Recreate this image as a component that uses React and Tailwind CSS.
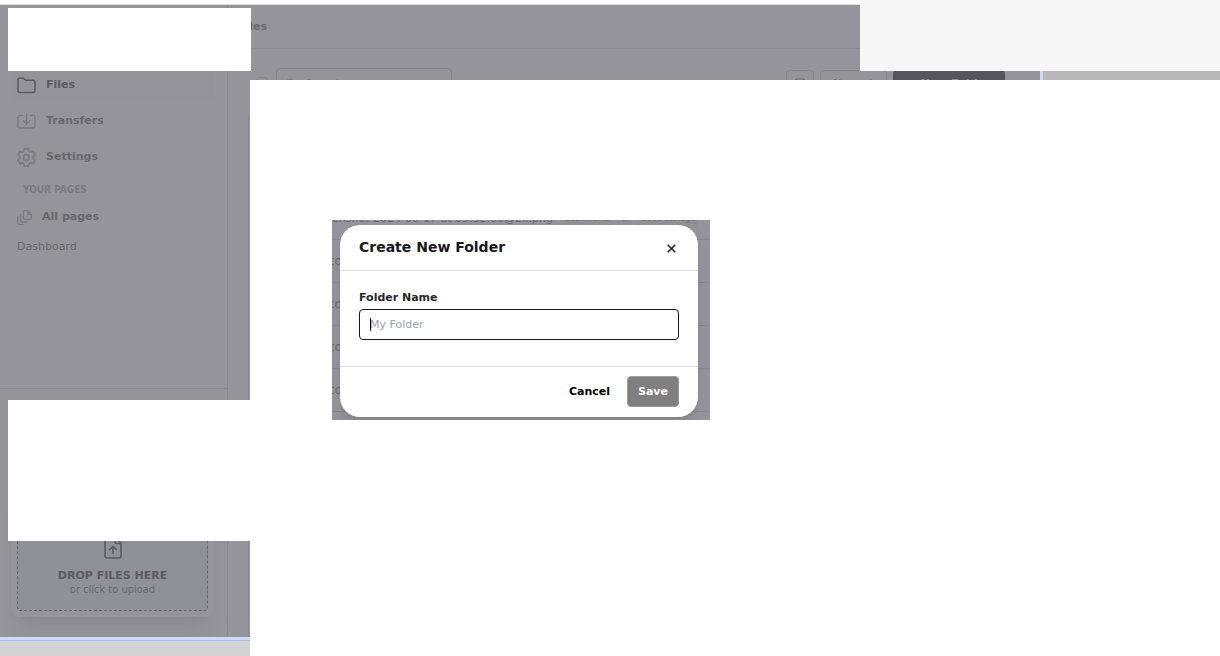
import React from "react";

const rows = [1, 2, 3, 4];

function FolderIcon() {
  return (
    <svg className="w-[19px] h-[17px] shrink-0 text-[#5c5b61]" viewBox="0 0 19 17" fill="none" stroke="currentColor" strokeWidth="1.6" strokeLinejoin="round">
      <path d="M1 3.2C1 1.8 1.7 1 3 1h2.6c.8 0 1.2.3 1.6.9l.5.7c.3.4.7.6 1.2.6H16c1.3 0 2 .8 2 2V13.5c0 1.3-.7 2-2 2H3c-1.3 0-2-.7-2-2V3.2Z" />
    </svg>
  );
}

function TransferIcon() {
  return (
    <svg className="w-[19px] h-[17px] shrink-0 text-[#7c7b81]" viewBox="0 0 19 17" fill="none" stroke="currentColor" strokeWidth="1.5" strokeLinecap="round" strokeLinejoin="round">
      <path d="M5.5 2.5H3C1.7 2.500 1 3.200 1 4.500v8.500c0 1.300.7 2 2 2h13c1.300 0 2-.7 2-2V4.500c0-1.300-.7-2-2-2h-2.500M9.500.8v10M6.300 7.800l3.200 3.300L12.700 7.800" />
    </svg>
  );
}

function GearIcon() {
  return (
    <svg className="w-[19px] h-[19px] shrink-0 text-[#7c7b81]" viewBox="2.2 2.2 19.6 19.6" fill="none" stroke="currentColor" strokeWidth="1.8" strokeLinecap="round" strokeLinejoin="round">
      <path d="M9.594 3.940c.09-.542.560-.940 1.110-.940h2.593c.550 0 1.020.398 1.110.940l.213 1.281c.063.374.313.686.645.870.074.040.147.083.220.127.325.196.720.257 1.075.124l1.217-.456a1.125 1.125 0 0 1 1.370.490l1.296 2.247a1.125 1.125 0 0 1-.260 1.431l-1.003.827c-.293.241-.438.613-.430.992a7.723 7.723 0 0 1 0 .255c-.008.378.137.750.430.991l1.004.827c.424.350.534.955.260 1.430l-1.298 2.247a1.125 1.125 0 0 1-1.369.491l-1.217-.456c-.355-.133-.750-.072-1.076.124a6.470 6.470 0 0 1-.220.128c-.331.183-.581.495-.644.869l-.213 1.281c-.090.543-.560.940-1.110.940h-2.594c-.550 0-1.019-.398-1.110-.940l-.213-1.281c-.062-.374-.312-.686-.644-.870a6.520 6.520 0 0 1-.220-.127c-.325-.196-.720-.257-1.076-.124l-1.217.456a1.125 1.125 0 0 1-1.369-.490l-1.297-2.247a1.125 1.125 0 0 1 .260-1.431l1.004-.827c.292-.240.437-.613.430-.991a6.932 6.932 0 0 1 0-.255c.007-.380-.138-.751-.430-.992l-1.004-.827a1.125 1.125 0 0 1-.260-1.430l1.297-2.247a1.125 1.125 0 0 1 1.370-.491l1.216.456c.356.133.751.072 1.076-.124.072-.044.146-.086.220-.128.332-.183.582-.495.644-.869l.214-1.280Z" />
      <circle cx="12" cy="12" r="3" />
    </svg>
  );
}

function PagesIcon() {
  return (
    <svg className="w-[15px] h-[15px] shrink-0 text-[#7c7b81]" viewBox="0 0 15 15" fill="none" stroke="currentColor" strokeWidth="1.3" strokeLinejoin="round">
      <path d="M7.5.7h3.3l3.5 3.5v4.1c0 .7-.4 1.1-1.1 1.1H7.5c-.7 0-1.1-.4-1.1-1.1V1.8C6.4 1.1 6.8.7 7.5.7ZM10.6.9v3.500h3.500M3.600 3.700v7.400c0 .7.4 1.100 1.100 1.100h6M.7 6.300v6.900c0 .7.4 1.100 1.100 1.100h5" />
    </svg>
  );
}

function UploadIcon() {
  return (
    <svg className="w-[18px] h-6 shrink-0 text-[#5c5b61]" viewBox="0 0 18 24" fill="none" stroke="currentColor" strokeWidth="1.6" strokeLinejoin="round" strokeLinecap="round">
      <path d="M3 1h8l6 6v13c0 1.300-.7 2-2 2H3c-1.300 0-2-.7-2-2V3c0-1.300.7-2 2-2ZM11 1v5c0 1 .5 1.500 1.500 1.500H17M9 17.500v-7M5.700 13.500 9 10.200l3.300 3.300" />
    </svg>
  );
}

function NavItem({ icon, children, active }) {
  return (
    <a href="#" className={"flex items-center gap-[10px] h-[30px] px-[6px] rounded font-bold " + (active ? "bg-[#949399] text-[#5c5b61]" : "")}>
      {icon}
      {children}
    </a>
  );
}

function Sidebar() {
  return (
    <aside className="flex w-[228px] shrink-0 flex-col border-r border-[#8b8a90] pr-[13px] pl-[11px]">
      <nav className="flex h-[383px] flex-col pt-[65px]">
        <div className="flex flex-col gap-[6px]">
          <NavItem active icon={<FolderIcon />}>Files</NavItem>
          <NavItem icon={<TransferIcon />}>Transfers</NavItem>
          <NavItem icon={<GearIcon />}>Settings</NavItem>
        </div>
        <h2 className="mt-[10px] px-3 text-[10px] leading-4 font-bold font-['DejaVu_Sans_Condensed','DejaVu_Sans',sans-serif] text-[#7c7b81]">YOUR PAGES</h2>
        <a href="#" className="mt-[9px] flex h-5 items-center gap-[10px] px-[6px] font-bold">
          <PagesIcon />
          All pages
        </a>
        <a href="#" className="mt-3 px-[6px] leading-4">Dashboard</a>
      </nav>
      <div className="-mr-[13px] -ml-[11px] flex flex-1 flex-col justify-end border-t border-[#8b8a90] pr-[13px] pb-5 pl-[11px]">
        <div className="rounded-lg p-[6px] shadow-xl shadow-black/5">
          <button className="flex h-[110px] w-full flex-col items-center rounded border border-dashed border-[#69686e] bg-[#909196] pt-[34px] text-[#5c5b61]">
            <UploadIcon />
            <span className="mt-2 font-bold leading-4">DROP FILES HERE</span>
            <span className="leading-3 font-['DejaVu_Sans_Condensed','DejaVu_Sans',sans-serif] text-[#6a696f]">or click to upload</span>
          </button>
        </div>
      </div>
    </aside>
  );
}

function TopStrip() {
  return (
    <div className="relative flex h-[75px] flex-col overflow-hidden bg-[#95949a] text-[#6a696f]">
      <div className="flex h-11 shrink-0 items-center border-b border-[#8b8a90] pt-px font-bold">
        <span className="-ml-3">Files</span>
      </div>
      <div className="flex items-start pt-[19px]">
        <input type="checkbox" aria-label="Select all" className="mt-[9px] ml-[6px] h-3 w-3 appearance-none rounded border border-[#87868c]" />
        <label className="ml-2 flex h-8 w-[176px] items-center gap-2 rounded border border-[#87868c] px-2">
          <svg className="h-3 w-3" viewBox="0 0 12 12" fill="none" stroke="#7c7b81"><circle cx="5" cy="5" r="4" /><path d="m8 8 3 3" /></svg>
          <input aria-label="Search" placeholder="Search" className="w-24 bg-transparent placeholder:text-[#7c7b81]" />
        </label>
        <div className="ml-[334px] flex gap-[6px] pt-[2px]">
          <button aria-label="View" className="flex h-7 w-7 items-center justify-center rounded border border-[#87868c]">
            <svg className="h-3 w-3" viewBox="0 0 12 12" fill="none" stroke="#6a696f"><rect x="1" y="1" width="10" height="10" rx="2" /></svg>
          </button>
          <button className="h-7 w-[67px] rounded border border-[#87868c]">Newest</button>
          <button className="h-7 w-28 rounded bg-[#56555b] font-bold text-[#95949a]">+ New Folder</button>
        </div>
      </div>
      <div className="absolute top-0 right-0 h-full w-[180px] border-l-[3px] border-[#cbdcfb] bg-[#b9b9b9]" />
    </div>
  );
}

function CreateFolderDialog() {
  return (
    <div className="relative mt-[140px] ml-[82px] h-[200px] w-[378px] overflow-hidden bg-[#95949a] px-2 pt-[5px] text-[#6a696f]">
      <div aria-hidden="true" className="absolute inset-x-0 -top-[10px]">
        <div className="flex h-[30px] items-start border-b border-[#87868c] whitespace-nowrap">
          <span className="leading-[18px]">enshot 2024-06-17 at 03.32.00@2x.png</span>
          <span className="ml-2 flex gap-1 text-[8px] leading-[18px]">
            <span className="rounded bg-[#909095] px-1">bookmarks</span>
            <span className="rounded bg-[#909095] px-1">ui</span>
            <span className="rounded bg-[#909095] px-1">cloud storage</span>
          </span>
        </div>
        {rows.map((row) => (
          <div key={row} className="flex h-[43px] items-center border-b border-[#87868c] text-[12px]">
            <span className="-ml-1">co</span>
          </div>
        ))}
      </div>
      <form role="dialog" aria-labelledby="dialog-title" onSubmit={(e) => e.preventDefault()} className="relative flex w-[358px] flex-col rounded-[20px] bg-white text-black shadow-lg">
        <header className="flex h-[46px] items-center justify-between border-b border-[#e2e2e4] px-[19px] pb-px">
          <h1 id="dialog-title" className="text-[14px] leading-5 font-bold text-[#18181b]">Create New Folder</h1>
          <button type="button" aria-label="Close" className="mt-[3px] flex h-4 w-4 items-center justify-center">
            <svg className="h-[9px] w-[9px]" viewBox="0 0 9 9" stroke="#27272a" strokeWidth="1.6"><path d="m.7.7 7.6 7.6M8.3.7.7 8.3" /></svg>
          </button>
        </header>
        <div className="flex h-24 flex-col border-b border-[#e2e2e4] px-[19px] pt-[19px]">
          <label htmlFor="folder-name" className="leading-4 font-bold text-[#27272a]">Folder Name</label>
          <span className="relative mt-[3px] flex">
            <input id="folder-name" placeholder="My Folder" className="h-[31px] w-full rounded border border-[#18181b] px-[10px] shadow-xs outline-none placeholder:text-[#9ca3af]" />
            <span aria-hidden="true" className="absolute top-[9px] left-[11px] h-[13px] w-px bg-black" />
          </span>
        </div>
        <footer className="flex h-[50px] items-center justify-end gap-[17px] px-[19px] pb-px font-bold">
          <button type="button" className="h-[31px] pt-px">Cancel</button>
          <button type="submit" className="h-[31px] w-[52px] rounded border border-[#9b9b9b] bg-[#7f7f7f] pt-px text-white">Save</button>
        </footer>
      </form>
    </div>
  );
}

export default function App() {
  return (
    <div className="relative flex min-h-screen flex-col overflow-hidden bg-white font-['DejaVu_Sans',sans-serif] text-[11px] text-[#69686e]">
      <div className="h-[5px] border-b border-[#dcdcdc]" />
      <div className="flex flex-1">
        <div className="flex w-[250px] shrink-0 flex-col">
          <div className="flex flex-1 bg-[#95949a]">
            <Sidebar />
            <div className="flex flex-1 flex-col">
              <div className="h-11 border-b border-[#8b8a90]" />
              <div className="mt-[66px] ml-5 flex-1 border-l border-[#8b8a90]" />
            </div>
          </div>
          <div className="h-1 border-b border-[#a9bddf] bg-[#cbdcfb]" />
          <div className="h-[15px] bg-[#d3d3d3]" />
        </div>
        <main className="min-w-0 flex-1">
          <TopStrip />
          <CreateFolderDialog />
        </main>
      </div>
      <div className="absolute top-2 left-2 h-[63px] w-[243px] bg-white" />
      <div className="absolute top-[400px] left-2 h-[141px] w-[242px] bg-white" />
      <div className="absolute top-0 right-0 left-[860px] h-[71px] bg-[#f7f7f7]" />
    </div>
  );
}
